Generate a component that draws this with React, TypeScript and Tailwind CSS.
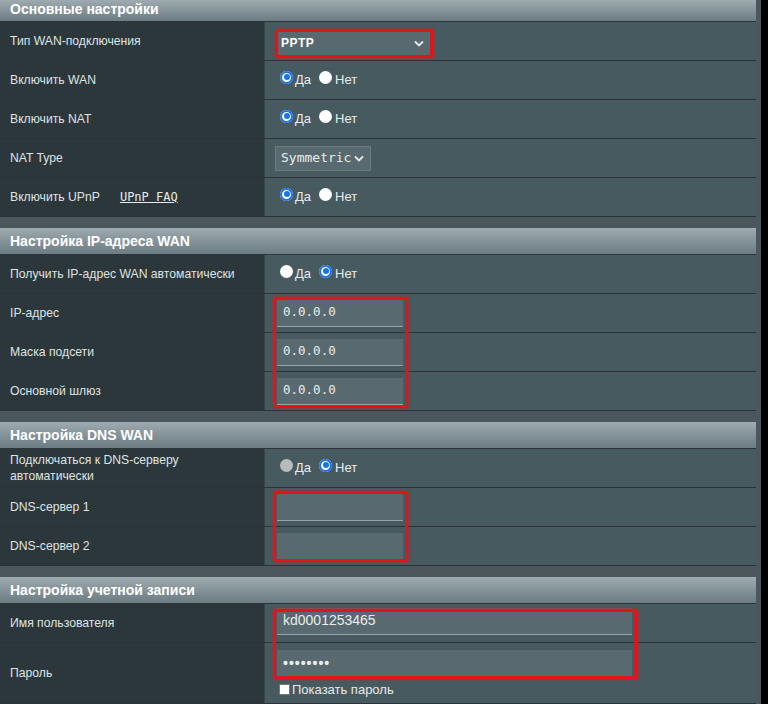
import React from 'react'

const FONT = { fontFamily: '"Liberation Sans", Arial, sans-serif' }
const MONO = { fontFamily: '"DejaVu Sans Mono", "Liberation Mono", monospace' }
const NARROW = { fontFamily: '"Liberation Sans Narrow", "Liberation Sans", Arial, sans-serif' }

function Header({ title, first }: { title: string; first?: boolean }) {
  return (
    <div
      className={`flex items-center px-[10px] bg-gradient-to-b from-[#9eabb0] to-[#6c7c82] border-b border-[#2c363a] text-white font-bold text-[14px] ${
        first ? 'h-[22px] pb-[2px]' : 'h-[27px]'
      }`}
    >
      {title}
    </div>
  )
}

function Row({ label, children, h = 'h-[39px]', extra }: { label: React.ReactNode; children?: React.ReactNode; h?: string; extra?: React.ReactNode }) {
  return (
    <div className={`grid grid-cols-[265px_1fr] border-b border-[#2a3438] ${h}`}>
      <div className="flex items-center gap-[20px] pl-[10px] pr-2 bg-[#2c373b] text-[#dfe3e4] text-[12.2px] leading-[16px] border-r border-[#39454a]">
        {label}
        {extra}
      </div>
      <div className="flex items-center pl-[12px] bg-[#475a60]">{children}</div>
    </div>
  )
}

function Radio({ state }: { state: 'on' | 'off' | 'dis' }) {
  if (state === 'on')
    return (
      <span className="inline-flex w-[13px] h-[13px] rounded-full bg-white items-center justify-center -translate-y-[3px]">
        <span className="w-[13px] h-[13px] rounded-full border-[2px] border-[#1a73e8] flex items-center justify-center">
          <span className="w-[6px] h-[6px] rounded-full bg-[#1a73e8]" />
        </span>
      </span>
    )
  return (
    <span
      className={`inline-block w-[13px] h-[13px] rounded-full -translate-y-[3px] ${
        state === 'dis' ? 'bg-[#b9bcbd]' : 'bg-white'
      }`}
    />
  )
}

function YesNo({ yes }: { yes: 'on' | 'off' | 'dis' }) {
  const noState = yes === 'on' ? 'off' : 'on'
  return (
    <div className="flex items-center text-[13px] text-[#e8ecec] pl-[3px]">
      <Radio state={yes} />
      <span className="ml-[2px] mr-[8px]">Да</span>
      <Radio state={noState} />
      <span className="ml-[3px]">Нет</span>
    </div>
  )
}

function Chevron() {
  return (
    <svg width="10" height="7" viewBox="0 0 10 7" className="shrink-0">
      <path d="M1 1.5 L5 5.5 L9 1.5" fill="none" stroke="#e6eaea" strokeWidth="1.8" />
    </svg>
  )
}

function TextInput({ value, w = 'w-[126px]', font = MONO, cls = 'text-[12.5px]' }: { value?: string; w?: string; font?: React.CSSProperties; cls?: string }) {
  return (
    <div
      className={`${w} h-[27px] bg-[#58696f] border-b border-[#93a3a8] flex items-center pl-[6px] text-[#e9eded] ${cls}`}
      style={font}
    >
      {value}
    </div>
  )
}

export default function App() {
  return (
    <div className="w-[768px] h-[704px] overflow-hidden bg-black" style={FONT}>
      <div className="w-[761px] h-full bg-[#4b575c]">
        <div className="w-[756px]">
          <Header title="Основные настройки" first />
          <Row label="Тип WAN-подключения">
            <div className="ml-[-2px] border-[3px] border-[#e0141b] rounded-[1px] shadow-[0_0_3px_#e0141b] translate-y-[2px]">
              <div className="w-[152px] h-[23px] bg-[#58696f] flex items-center justify-between pl-[3px] pr-[6px] text-white text-[12px] font-bold tracking-[0.5px]">
                PPTP
                <Chevron />
              </div>
            </div>
          </Row>
          <Row label="Включить WAN">
            <YesNo yes="on" />
          </Row>
          <Row label="Включить NAT">
            <YesNo yes="on" />
          </Row>
          <Row label="NAT Type">
            <div className="ml-[-2px] w-[96px] h-[25px] bg-[#58696f] border border-[#6b7c81] flex items-center justify-between pl-[5px] pr-[6px] text-[13px] text-[#e9eded]" style={MONO}>
              Symmetric
              <Chevron />
            </div>
          </Row>
          <Row
            label="Включить UPnP"
            extra={
              <span className="underline text-[12px] text-[#e6eaea]" style={MONO}>
                UPnP FAQ
              </span>
            }
          >
            <YesNo yes="on" />
          </Row>

          <div className="h-[11px] bg-[#4b575c]" />
          <Header title="Настройка IP-адреса WAN" />
          <Row label="Получить IP-адрес WAN автоматически">
            <YesNo yes="off" />
          </Row>
          <div className="relative">
            <Row label="IP-адрес">
              <TextInput value="0.0.0.0" />
            </Row>
            <Row label="Маска подсети">
              <TextInput value="0.0.0.0" />
            </Row>
            <Row label="Основной шлюз">
              <TextInput value="0.0.0.0" />
            </Row>
            <div className="absolute left-[273px] top-[3px] w-[135px] h-[111px] border-[3px] border-[#e0141b] rounded-[2px] shadow-[0_0_3px_#e0141b] pointer-events-none" />
          </div>

          <div className="h-[11px] bg-[#4b575c]" />
          <Header title="Настройка DNS WAN" />
          <Row label={<span>Подключаться к DNS-серверу<br />автоматически</span>}>
            <YesNo yes="dis" />
          </Row>
          <div className="relative">
            <Row label="DNS-сервер 1">
              <TextInput />
            </Row>
            <Row label="DNS-сервер 2">
              <TextInput />
            </Row>
            <div className="absolute left-[273px] top-[3px] w-[135px] h-[71px] border-[3px] border-[#e0141b] rounded-[2px] shadow-[0_0_3px_#e0141b] pointer-events-none" />
          </div>

          <div className="h-[11px] bg-[#4b575c]" />
          <Header title="Настройка учетной записи" />
          <div className="relative">
            <Row label="Имя пользователя">
              <TextInput value="kd0001253465" w="w-[355px]" font={NARROW} cls="text-[14px] -translate-y-[2px]" />
            </Row>
            <Row label="Пароль" h="h-[61px]">
              <div className="flex flex-col pt-[4px]">
                <TextInput value="••••••••" w="w-[355px]" font={NARROW} cls="text-[14px] tracking-[1px] font-bold" />
                <label className="flex items-center gap-[2px] mt-[3px] ml-[2px] text-[13px] text-[#e6eaea]" style={NARROW}>
                  <span className="inline-block w-[11px] h-[11px] bg-white border border-[#777] -translate-y-[1px]" />
                  Показать пароль
                </label>
              </div>
            </Row>
            <div className="absolute left-[273px] top-[5px] w-[364px] h-[70px] border-[3px] border-[#e0141b] rounded-[2px] shadow-[0_0_3px_#e0141b] pointer-events-none" />
          </div>
        </div>
      </div>
    </div>
  )
}
